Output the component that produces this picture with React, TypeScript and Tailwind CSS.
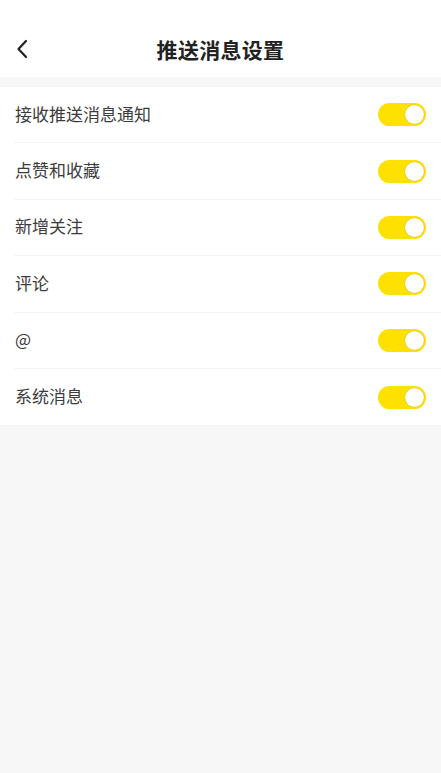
import React, { FC, useState } from 'react';

interface ToggleProps {
    on: boolean;
    onToggle: () => void;
}

const Toggle: FC<ToggleProps> = ({ on, onToggle }) => (
    <button
        onClick={onToggle}
        className={
            'relative w-[48px] h-[23px] rounded-full transition-colors ' + (on ? 'bg-[#ffe100]' : 'bg-[#e5e5e5]')
        }
    >
        <span
            className={
                'absolute top-[2px] w-[19px] h-[19px] rounded-full bg-white shadow-[0_0_1px_rgba(0,0,0,0.35)] transition-all ' +
                (on ? 'left-[27px]' : 'left-[2px]')
            }
        ></span>
    </button>
);

const App = () => {
    const [items, setItems] = useState([
        { name: '接收推送消息通知', on: true },
        { name: '点赞和收藏', on: true },
        { name: '新增关注', on: true },
        { name: '评论', on: true },
        { name: '@', on: true },
        { name: '系统消息', on: true },
    ]);

    const toggle = (i: number) => setItems((list) => list.map((it, idx) => (idx === i ? { ...it, on: !it.on } : it)));

    return (
        <div
            className="min-h-[773px] bg-[#f7f7f7]"
            style={{ fontFamily: '"Noto Sans CJK SC", "Noto Sans", sans-serif' }}
        >
            {/* header */}
            <header className="relative bg-white h-[77px] pt-[22px] flex items-center justify-center">
                <button className="absolute left-[12px] top-[38px] w-[20px] h-[22px] flex items-center justify-center">
                    <svg width="12" height="20" viewBox="0 0 12 20" fill="none">
                        <path d="M10 2 L2.5 10 L10 18" stroke="#222" strokeWidth="2.2" strokeLinecap="round" strokeLinejoin="round" />
                    </svg>
                </button>
                <div className="text-[21px] leading-none font-bold text-[#222] tracking-[0.3px]">推送消息设置</div>
            </header>

            <div className="mt-[10px] bg-white">
                {items.map((it, i) => (
                    <div key={it.name} className="pl-[14px]">
                        <div
                            className={
                                'h-[56.4px] flex items-center pr-[15px] ' +
                                (i < items.length - 1 ? 'border-b border-[#f4f4f4]' : '')
                            }
                        >
                            <div className="pl-[1px] pb-[3px] text-[17px] leading-none text-[#3c3c3c]">{it.name}</div>
                            <div className="ml-auto flex items-center">
                                <Toggle on={it.on} onToggle={() => toggle(i)} />
                            </div>
                        </div>
                    </div>
                ))}
            </div>
        </div>
    );
};

export default App;
